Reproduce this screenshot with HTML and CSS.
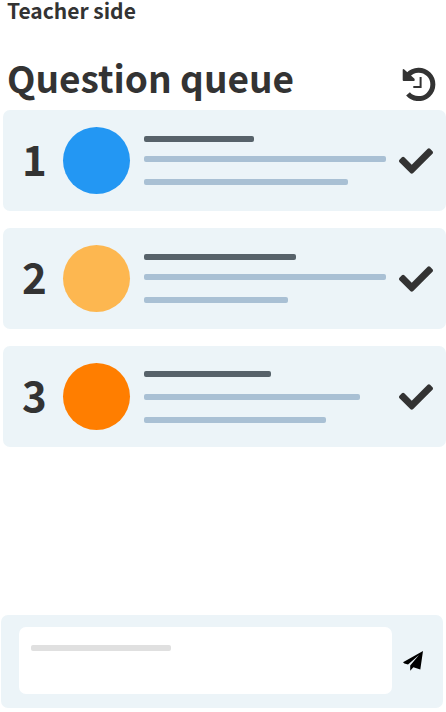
FILE: index.html
```html
<!DOCTYPE html>
<html lang="en">
<head>
  <meta charset="utf-8">
  <meta name="viewport" content="width=device-width, initial-scale=1">
  <title>Question queue</title>
  <link rel="stylesheet" href="styles.css">
</head>
<body>
  <svg class="sprite" aria-hidden="true">
    <symbol id="check" viewBox="0 64 512 384">
      <path d="M173.898 439.404l-166.4-166.4c-9.997-9.997-9.997-26.206 0-36.204l36.203-36.204c9.997-9.998 26.207-9.998 36.204 0L192 312.69 432.095 72.596c9.997-9.997 26.207-9.997 36.204 0l36.203 36.204c9.997 9.997 9.997 26.206 0 36.204l-294.4 294.401c-9.998 9.997-26.207 9.997-36.204-.001z"/>
    </symbol>
  </svg>
  <main class="page">
    <p class="role">Teacher side</p>
    <header class="heading">
      <h1 class="title">Question queue</h1>
      <button class="icon-button" type="button" aria-label="History">
        <svg class="history" viewBox="0 0 34 34">
          <path class="ring" d="M6.2 7.8A14.2 14.2 0 1 1 6 26.8"/>
          <path d="M.7 2.4Q1.4 1.5 2.3 2.4L12.5 11.8Q13.4 13.9 12 14H1.7Q.7 14 .7 13z"/>
          <path class="hands" d="M18.6 10v10H11.3"/>
        </svg>
      </button>
    </header>
    <ol class="queue">
      <li class="card">
        <span class="number">1</span>
        <span class="avatar blue"></span>
        <div class="lines">
          <span class="bar name w-110"></span>
          <span class="bar w-242"></span>
          <span class="bar w-204"></span>
        </div>
        <button class="icon-button" type="button" aria-label="Resolve question 1"><svg class="check"><use href="#check"/></svg></button>
      </li>
      <li class="card">
        <span class="number">2</span>
        <span class="avatar amber"></span>
        <div class="lines">
          <span class="bar name w-152"></span>
          <span class="bar w-242"></span>
          <span class="bar w-144"></span>
        </div>
        <button class="icon-button" type="button" aria-label="Resolve question 2"><svg class="check"><use href="#check"/></svg></button>
      </li>
      <li class="card">
        <span class="number">3</span>
        <span class="avatar orange"></span>
        <div class="lines even">
          <span class="bar name w-127"></span>
          <span class="bar w-216"></span>
          <span class="bar w-182"></span>
        </div>
        <button class="icon-button" type="button" aria-label="Resolve question 3"><svg class="check"><use href="#check"/></svg></button>
      </li>
    </ol>
    <form class="composer">
      <div class="field">
        <textarea class="message" aria-label="Message"></textarea>
        <span class="hint"></span>
      </div>
      <button class="icon-button" type="button" aria-label="Send">
        <svg class="send" viewBox="0 0 20 20">
          <path d="M20 0L0 11.2 1.4 12.6 5 13.4 16 4 7.2 14.6V19.8L10.4 16.2 17.3 18.6z"/>
        </svg>
      </button>
    </form>
  </main>
</body>
</html>
```

FILE: styles.css
```css
* {
  box-sizing: border-box;
}

body {
  margin: 0;
  background: #fff;
  color: #333;
  font-family: "Noto Sans CJK JP", "Noto Sans", sans-serif;
  font-weight: 700;
}

.sprite {
  position: absolute;
  width: 0;
  height: 0;
}

.page {
  display: flex;
  flex-direction: column;
  min-height: 100vh;
  padding-bottom: 4px;
}

.role {
  margin: 0;
  padding-left: 7px;
  font-size: 21px;
  line-height: 20px;
}

.heading {
  display: flex;
  align-items: flex-end;
  justify-content: space-between;
  margin-top: 33px;
  padding: 0 10px 9px 7px;
}

.title {
  margin: 0;
  font-size: 37px;
  line-height: 48px;
}

.icon-button {
  display: block;
  flex: none;
  padding: 0;
  border: 0;
  background: none;
  color: inherit;
  cursor: pointer;
}

.icon-button svg {
  display: block;
  fill: currentColor;
}

.history {
  width: 34px;
  height: 34px;
}

.history .ring {
  fill: none;
  stroke: currentColor;
  stroke-width: 5;
}

.history .hands {
  fill: none;
  stroke: currentColor;
  stroke-width: 2;
}

.queue {
  display: flex;
  flex-direction: column;
  gap: 17px;
  margin: 0 0 17px 3px;
  padding: 0;
  list-style: none;
}

.card {
  display: flex;
  align-items: center;
  min-height: 101px;
  padding: 0 13px 0 19px;
  border-radius: 7px;
  background: #ecf4f8;
}

.number {
  width: 41px;
  padding-bottom: 6px;
  font-size: 42px;
  line-height: 60px;
}

.avatar {
  flex: none;
  width: 67px;
  height: 67px;
  border-radius: 50%;
}

.blue {
  background: #2397f3;
}

.amber {
  background: #fdb750;
}

.orange {
  background: #ff7e00;
}

.lines {
  display: flex;
  flex: 1;
  flex-direction: column;
  gap: 17px;
  min-width: 0;
  margin: 0 13px 0 14px;
}

.bar {
  height: 6px;
  max-width: 100%;
  border-radius: 2px;
  background: #a9c0d4;
}

.name {
  margin-bottom: -3px;
  background: #57626a;
}

.even .name {
  margin-bottom: 0;
}

.w-110 { width: 110px; }
.w-127 { width: 127px; }
.w-144 { width: 144px; }
.w-152 { width: 152px; }
.w-182 { width: 182px; }
.w-204 { width: 204px; }
.w-216 { width: 216px; }
.w-242 { width: 242px; }

.check {
  width: 34px;
  height: 26px;
}

.composer {
  display: flex;
  align-items: center;
  gap: 11px;
  margin: auto 3px 0 1px;
  padding: 12px 20px 14px 18px;
  border-radius: 7px;
  background: #ecf4f8;
}

.field {
  position: relative;
  flex: 1;
}

.message {
  display: block;
  width: 100%;
  height: 67px;
  padding: 12px;
  border: 0;
  border-radius: 7px;
  background: #fff;
  color: inherit;
  font: inherit;
  resize: none;
}

.hint {
  position: absolute;
  top: 18px;
  left: 12px;
  width: 140px;
  height: 6px;
  border-radius: 2px;
  background: #e0e0e0;
  pointer-events: none;
}

.send {
  width: 20px;
  height: 20px;
  color: #000;
}
```
